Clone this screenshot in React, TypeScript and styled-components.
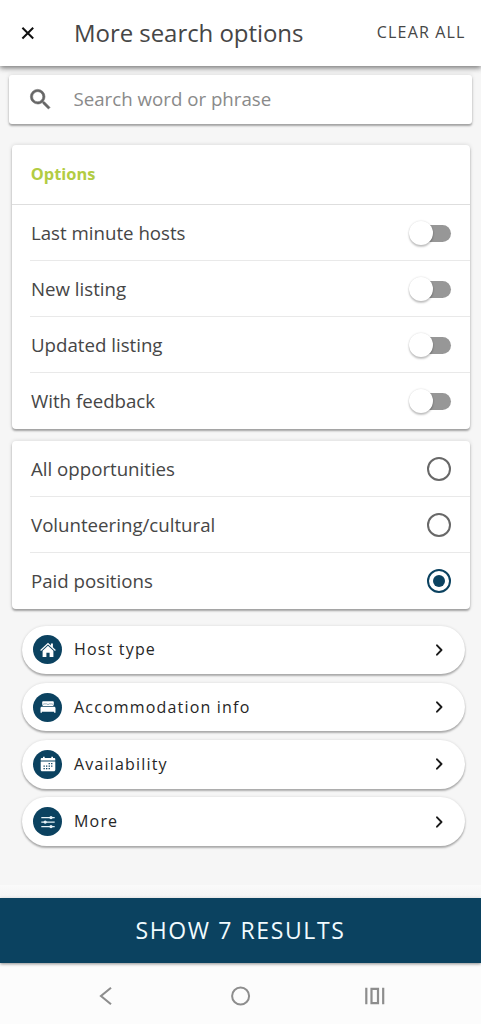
import React, { useState } from "react";
import styled, { createGlobalStyle } from "styled-components";

const GlobalStyle = createGlobalStyle`
  * { box-sizing: border-box; }
  body {
    margin: 0;
    background: #f6f6f6;
    font-family: "Open Sans", "Noto Sans", sans-serif;
    color: #464646;
  }
  button { font-family: inherit; border: 0; background: none; padding: 0; margin: 0; cursor: pointer; }
  svg { display: block; flex: none; }
`;

const Screen = styled.div`
  display: flex;
  flex-direction: column;
  width: 100%;
  height: 1024px;
  overflow: hidden;
`;

const TopBar = styled.header`
  display: flex;
  align-items: center;
  flex: none;
  height: 65.5px;
  padding: 0 15.5px 0 20px;
  background: #fff;
  box-shadow: 0 2px 5px rgba(0, 0, 0, 0.45), 0 0 9px rgba(0, 0, 0, 0.15);
`;

const Title = styled.h1`
  flex: 1;
  margin: 0 0 0 38px;
  font-size: 24px;
  font-weight: 400;
  line-height: 32px;
  letter-spacing: -0.05px;
  white-space: nowrap;
`;

const ClearButton = styled.button`
  padding-bottom: 2px;
  font-size: 16px;
  line-height: 24px;
  letter-spacing: 1.15px;
  color: #464646;
  white-space: nowrap;
`;

const Body = styled.main`
  display: flex;
  flex-direction: column;
  flex: 1;
  min-height: 0;
  padding-top: 9.5px;
`;

const SearchField = styled.label`
  display: flex;
  align-items: center;
  gap: 19.5px;
  flex: none;
  height: 48.5px;
  margin: 0 9px;
  padding-left: 18px;
  border-radius: 3px;
  background: #fff;
  box-shadow: 0 2px 2px rgba(0, 0, 0, 0.3), 0 0 4px rgba(0, 0, 0, 0.12);
`;

const SearchInput = styled.input`
  flex: 1;
  min-width: 0;
  padding: 0 0 1.5px;
  border: 0;
  outline: 0;
  background: none;
  font: 400 18.7px "Open Sans", "Noto Sans", sans-serif;
  color: #464646;
  &::placeholder { color: #8a8a8a; opacity: 1; }
`;

const Card = styled.section<{ $gap: number }>`
  flex: none;
  margin: ${(p) => p.$gap}px 11.5px 0 12px;
  border-radius: 4px;
  background: #fff;
  overflow: hidden;
  box-shadow: 0 2px 2px rgba(0, 0, 0, 0.3), 0 0 4px rgba(0, 0, 0, 0.14);
`;

const CardHeading = styled.h2`
  height: 60px;
  margin: 0;
  padding-left: 18.8px;
  border-bottom: 1px solid #dedede;
  font-size: 16.4px;
  font-weight: 700;
  line-height: 57.5px;
  color: #b2cc43;
`;

const Row = styled.div`
  display: flex;
  align-items: center;
  justify-content: space-between;
  height: 56.1px;
  margin-left: 18px;
  padding: 0 18.8px 0 1px;
  font-size: 18.7px;
  letter-spacing: -0.01px;
  border-bottom: 1px solid #e9e9e9;
  &:last-child { border-bottom-color: transparent; }
`;

const Toggle = styled.button`
  display: flex;
  align-items: center;
  width: 42px;
  height: 24px;
  margin-top: 1px;
`;

const Track = styled.span<{ $on: boolean }>`
  width: 30px;
  height: 17px;
  margin-left: 12px;
  border-radius: 9px;
  background: ${(p) => (p.$on ? "#6f92a6" : "#979797")};
`;

const Knob = styled.span<{ $on: boolean }>`
  flex: none;
  width: 24px;
  height: 24px;
  margin-left: ${(p) => (p.$on ? -24 : -42.2)}px;
  border-radius: 50%;
  background: ${(p) => (p.$on ? "#0b4260" : "#fff")};
  box-shadow: 0 2px 2px rgba(0, 0, 0, 0.22), 0 0 2px rgba(0, 0, 0, 0.16);
`;

const Radio = styled.button<{ $on: boolean }>`
  display: flex;
  align-items: center;
  justify-content: center;
  width: 24px;
  height: 24px;
  margin-top: 0.5px;
  border: 2px solid ${(p) => (p.$on ? "#0b4260" : "#686868")};
  border-radius: 50%;
  &::after {
    content: "";
    width: 12px;
    height: 12px;
    border-radius: 50%;
    background: ${(p) => (p.$on ? "#0b4260" : "transparent")};
  }
`;

const Pills = styled.nav`
  display: flex;
  flex-direction: column;
  flex: none;
  gap: 8.9px;
  margin: 16.5px 16px 0 21.5px;
`;

const Pill = styled.button`
  display: flex;
  align-items: center;
  height: 48.4px;
  padding: 0 18px 0 11.5px;
  border-radius: 25px;
  background: #fff;
  box-shadow: 0 2px 2px rgba(0, 0, 0, 0.28), 0 0 3px rgba(0, 0, 0, 0.12);
`;

const IconDisc = styled.span`
  display: flex;
  align-items: center;
  justify-content: center;
  flex: none;
  width: 29px;
  height: 29px;
  border-radius: 50%;
  background: #0b4260;
`;

const PillLabel = styled.span`
  flex: 1;
  margin-left: 12px;
  padding-bottom: 1px;
  text-align: left;
  font-size: 16px;
  line-height: 24px;
  letter-spacing: 1.18px;
  color: #262626;
`;

const Footer = styled.footer`
  display: flex;
  flex-direction: column;
  flex: none;
  padding-top: 13px;
  background: linear-gradient(#fafafa, #f5f5f5 12px, #fcfcfc 12px);
`;

const ResultsButton = styled.button`
  height: 65px;
  padding-bottom: 2px;
  background: #0b4260;
  color: #f1fbff;
  font-size: 23px;
  letter-spacing: 1.6px;
  box-shadow: 0 1px 3px rgba(0, 0, 0, 0.45);
`;

const SystemNav = styled.div`
  display: flex;
  align-items: center;
  justify-content: space-between;
  height: 61px;
  padding: 5px 94px 0 94px;
  color: #8d8d8d;
`;

const HouseIcon = () => (
  <svg width="16" height="16" viewBox="0 0 16 16" fill="#fff">
    <path d="M8 .7 10.9 3.4V1.4h2v3.9L15.8 8l-.8 1L8 2.5 1 9 .2 8Z" />
    <path d="M8 3.8 13.4 8.8V15H9.600v-4.200H6.400V15H2.600V8.800Z" />
  </svg>
);

const BedIcon = () => (
  <svg width="16" height="14" viewBox="0 0 16 14" fill="#fff">
    <path d="M3.400 1.200h9.200c.8 0 1.200.5 1.200 1.200v2.700l-.9.900H3.100l-.9-.9V2.400c0-.7.4-1.200 1.200-1.200Z" />
    <path d="M1.900 6.700h12.200c.8 0 1.400.6 1.400 1.400v4.700h-1.400v-1H1.900v1H.5V8.100c0-.8.6-1.400 1.400-1.400Z" />
    <path d="M3 4.700q.1-.8.9-.8h2.700q1.100 0 1.400.9.300-.9 1.400-.9h2.700q.8 0 .9.800" fill="none" stroke="#0b4260" strokeWidth=".45" />
  </svg>
);

const CalendarIcon = () => (
  <svg width="16" height="16" viewBox="0 0 16 16">
    <path fill="#fff" d="M3 .8h1.700v1.300h6.600V.8H13v1.300h1c.8 0 1.300.5 1.300 1.300v1.100H.7V3.400C.7 2.600 1.200 2.100 2 2.100h1ZM.7 5.500h14.600v8.200c0 .9-.6 1.500-1.500 1.500H2.200c-.9 0-1.500-.6-1.500-1.500Z" />
    <path fill="#0b4260" d="M8.600 7h1.300v1.300H8.600ZM11.100 7h1.300v1.300h-1.300ZM3.500 9.500h1.300v1.300H3.500ZM6 9.500h1.300v1.300H6ZM8.600 9.500h1.300v1.300H8.600ZM11.100 9.500h1.300v1.300h-1.300ZM3.500 12h1.300v1.200H3.500ZM6 12h1.300v1.200H6ZM8.600 12h1.300v1.200H8.600Z" />
  </svg>
);

const SlidersIcon = () => (
  <svg width="16" height="14" viewBox="0 0 16 14" fill="#e8f3f8">
    <path d="M1.300 1.900h13.400v1.300H1.300ZM1.300 6.400h13.400v1.300H1.300ZM1.300 10.900h13.400v1.300H1.300Z" />
    <circle cx="11" cy="2.550" r="1.600" />
    <circle cx="5.200" cy="7.050" r="1.600" />
    <circle cx="11" cy="11.550" r="1.600" />
  </svg>
);

const Chevron = () => (
  <svg width="16" height="16" viewBox="0 0 16 16" fill="none" stroke="#1a1a1a" strokeWidth="1.900" strokeLinecap="round" strokeLinejoin="round">
    <path d="M6 3.300 10.500 8 6 12.700" />
  </svg>
);

const SWITCHES = ["Last minute hosts", "New listing", "Updated listing", "With feedback"];
const KINDS = ["All opportunities", "Volunteering/cultural", "Paid positions"];
const SECTIONS = [
  { label: "Host type", Icon: HouseIcon },
  { label: "Accommodation info", Icon: BedIcon },
  { label: "Availability", Icon: CalendarIcon },
  { label: "More", Icon: SlidersIcon },
];

export default function App() {
  const [enabled, setEnabled] = useState<string[]>([]);
  const [kind, setKind] = useState("Paid positions");

  const toggle = (name: string) =>
    setEnabled((list) => (list.includes(name) ? list.filter((n) => n !== name) : [...list, name]));

  return (
    <Screen>
      <GlobalStyle />
      <TopBar>
        <button aria-label="Close">
          <svg width="16" height="16" viewBox="0 0 16 16" stroke="#111" strokeWidth="2">
            <path d="M2.400 2.700 13.200 13.500M13.200 2.700 2.400 13.500" />
          </svg>
        </button>
        <Title>More search options</Title>
        <ClearButton>CLEAR ALL</ClearButton>
      </TopBar>
      <Body>
        <SearchField>
          <svg width="27" height="27" viewBox="0 0 24 24" fill="#666" stroke="#666" strokeWidth=".5">
            <path d="M15.500 14h-.79l-.28-.27A6.471 6.471 0 0 0 16 9.500 6.500 6.500 0 1 0 9.500 16c1.610 0 3.090-.59 4.230-1.570l.27.28v.79l5 4.990L20.490 19l-4.990-5zm-6 0C7.010 14 5 11.990 5 9.500S7.010 5 9.500 5 14 7.010 14 9.500 11.990 14 9.500 14z" />
          </svg>
          <SearchInput placeholder="Search word or phrase" />
        </SearchField>
        <Card $gap={21.5}>
          <CardHeading>Options</CardHeading>
          {SWITCHES.map((name) => (
            <Row key={name}>
              {name}
              <Toggle role="switch" aria-label={name} aria-checked={enabled.includes(name)} onClick={() => toggle(name)}>
                <Track $on={enabled.includes(name)} />
                <Knob $on={enabled.includes(name)} />
              </Toggle>
            </Row>
          ))}
        </Card>
        <Card $gap={11.4}>
          {KINDS.map((name) => (
            <Row key={name}>
              {name}
              <Radio role="radio" aria-label={name} aria-checked={kind === name} $on={kind === name} onClick={() => setKind(name)} />
            </Row>
          ))}
        </Card>
        <Pills>
          {SECTIONS.map(({ label, Icon }) => (
            <Pill key={label}>
              <IconDisc>
                <Icon />
              </IconDisc>
              <PillLabel>{label}</PillLabel>
              <Chevron />
            </Pill>
          ))}
        </Pills>
      </Body>
      <Footer>
        <ResultsButton>SHOW 7 RESULTS</ResultsButton>
        <SystemNav>
          <svg width="24" height="24" viewBox="0 0 24 24" fill="none" stroke="currentColor" strokeWidth="2.100">
            <path d="M17 3.800 7 12l10 8.200" />
          </svg>
          <svg width="24" height="24" viewBox="0 0 24 24" fill="none" stroke="currentColor" strokeWidth="2">
            <circle cx="11.600" cy="12" r="8.500" />
          </svg>
          <svg width="24" height="24" viewBox="0 0 24 24" fill="none" stroke="currentColor" strokeWidth="2.200">
            <path d="M3.300 3.800v16.400M20.200 3.800v16.400M8.500 4.800h6.500v14.400H8.500Z" />
          </svg>
        </SystemNav>
      </Footer>
    </Screen>
  );
}
